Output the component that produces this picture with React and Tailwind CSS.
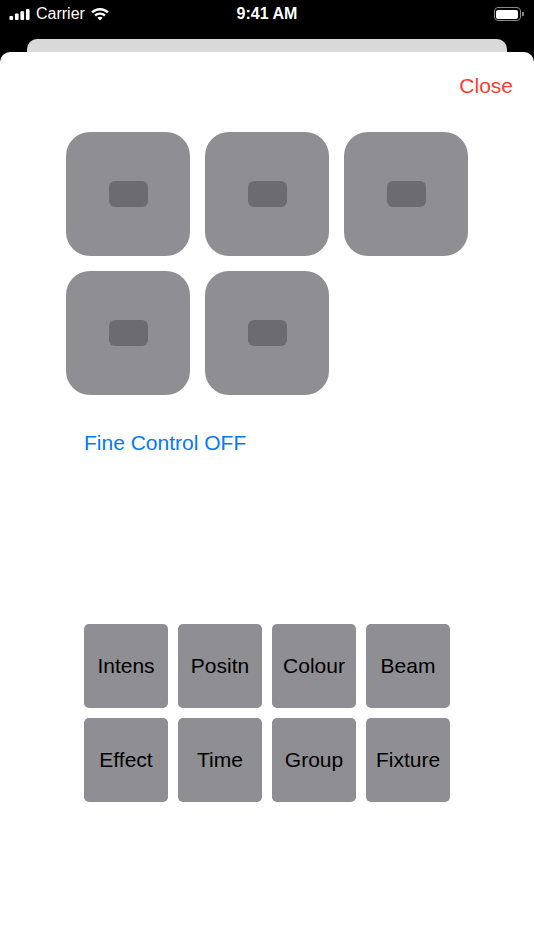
import { useState } from "react";

const tiles = [1, 2, 3, 4, 5];
const keys = ["Intens", "Positn", "Colour", "Beam", "Effect", "Time", "Group", "Fixture"];

function StatusBar() {
  return (
    <div className="h-[39px] flex items-start justify-between px-[9px] pt-[5px] text-white">
      <div className="flex items-center gap-[6px] h-[18px] w-[150px]">
        <svg width="21" height="11" viewBox="0 0 22 12" fill="white">
          <rect x="0" y="7.5" width="4" height="4.5" rx="1" />
          <rect x="6" y="5" width="4" height="7" rx="1" />
          <rect x="12" y="2.5" width="4" height="9.5" rx="1" />
          <rect x="18" y="0" width="4" height="12" rx="1" />
        </svg>
        <span className="text-[16px] leading-[18px]">Carrier</span>
        <svg width="18" height="13" viewBox="0 0 18 13" fill="white">
          <path d="M9 0C5.6 0 2.5 1.3.2 3.5l1.7 1.8C3.8 3.5 6.3 2.4 9 2.4s5.2 1.1 7.1 2.9l1.7-1.8C15.5 1.3 12.4 0 9 0z" />
          <path d="M9 4.4c-2.2 0-4.200.9-5.700 2.300L5 8.5c1-1 2.4-1.7 4-1.7s3 .7 4 1.7l1.7-1.8C13.2 5.3 11.2 4.4 9 4.4z" />
          <path d="M9 8.8c-1 0-1.9.4-2.6 1L9 12.6l2.6-2.8c-.7-.6-1.6-1-2.6-1z" />
        </svg>
      </div>
      <span className="text-[16px] leading-[18px] font-semibold">9:41 AM</span>
      <div className="flex items-center justify-end h-[18px] w-[150px] pr-[1px]">
        <div className="w-[27px] h-[14px] rounded-[4px] border border-[#8a8a8a] p-[1.5px]">
          <div className="w-full h-full rounded-[2px] bg-white" />
        </div>
        <div className="w-[2px] h-[4px] bg-[#8a8a8a] rounded-r-[1px] ml-[1px]" />
      </div>
    </div>
  );
}

function App() {
  const [fine, setFine] = useState(false);

  return (
    <div
      className="w-full h-[950px] bg-black flex flex-col overflow-hidden"
      style={{ fontFamily: '"Liberation Sans", Arial, sans-serif' }}
    >
      <StatusBar />
      <div className="mx-[27px] h-[13px] bg-[#d9d9d9] rounded-t-[10px]" />
      <div className="flex-1 bg-white rounded-t-[10px] flex flex-col">
        <div className="flex justify-end pr-[21px] pt-[22px]">
          <button className="text-[21px] leading-[24px] text-[#ff3b30]">Close</button>
        </div>

        <div className="grid grid-cols-[repeat(3,124px)] gap-[15px] pl-[66px] mt-[34px]">
          {tiles.map((t) => (
            <div
              key={t}
              className="w-[124px] h-[124px] rounded-[24px] bg-[#8e8e93] flex items-center justify-center"
            >
              <div className="w-[39px] h-[26px] rounded-[6px] bg-[#6c6c70]" />
            </div>
          ))}
        </div>

        <div className="pl-[84px] mt-[36px]">
          <button
            onClick={() => setFine(!fine)}
            className="text-[21px] leading-[24px] text-[#007aff]"
          >
            Fine Control {fine ? "ON" : "OFF"}
          </button>
        </div>

        <div className="grid grid-cols-[repeat(4,84px)] gap-[10px] pl-[84px] mt-[167px]">
          {keys.map((k) => (
            <button
              key={k}
              className="w-[84px] h-[84px] rounded-[5px] bg-[#8e8e93] text-black text-[21px] flex items-center justify-center"
            >
              {k}
            </button>
          ))}
        </div>
      </div>
    </div>
  );
}

export default App;
